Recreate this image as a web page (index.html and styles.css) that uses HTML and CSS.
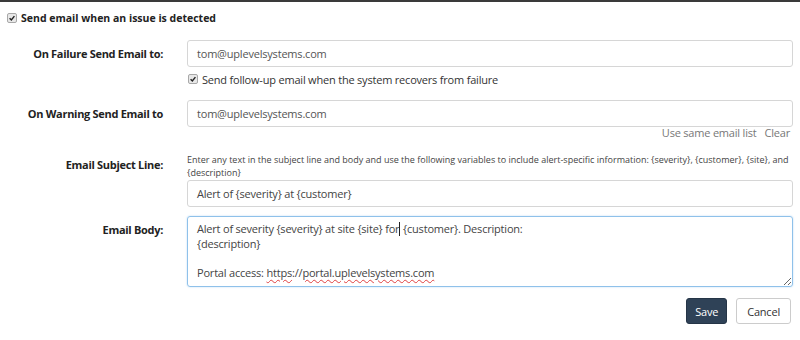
FILE: index.html
```html
<!DOCTYPE html>
<html lang="en">
<head>
    <meta charset="UTF-8">
    <meta name="viewport" content="width=device-width, initial-scale=1.0">
    <title>Email alerts</title>

    <link rel="stylesheet" href="styles.css">
</head>
<body>

    <div id="header" class="check-line">
        <span class="tick"><svg viewBox="0 0 10 10"><path d="M2 5.2 L4.2 7.4 L8 2.6" /></svg></span>
        <b>Send email when an issue is detected</b>
    </div>

    <div id="form">

        <label class="lbl">On Failure Send Email to:</label>
        <div class="field">
            <div class="input">tom@uplevelsystems.com</div>
            <div class="check-line follow">
                <span class="tick"><svg viewBox="0 0 10 10"><path d="M2 5.2 L4.2 7.4 L8 2.6" /></svg></span>
                Send follow-up email when the system recovers from failure
            </div>
        </div>

        <label class="lbl">On Warning Send Email to</label>
        <div class="field">
            <div class="input">tom@uplevelsystems.com</div>
            <div class="links"><span>Use same email list</span><span>Clear</span></div>
        </div>

        <label class="lbl lbl-top">Email Subject Line:</label>
        <div class="field">
            <p class="help">Enter any text in the subject line and body and use the following variables to include alert-specific information: {severity}, {customer}, {site}, and {description}</p>
            <div class="input dark">Alert of {severity} at {customer}</div>
        </div>

        <label class="lbl lbl-body">Email Body:</label>
        <div class="field">
            <div class="textarea">Alert of severity {severity} at site {site} for<span class="caret"></span> {customer}. Description:<br>{description}<br><br>Portal access: <span class="typo">https</span>://<span class="typo">portal.uplevelsystems.com</span></div>
            <div id="buttons">
                <button class="button save">Save</button>
                <button class="button cancel">Cancel</button>
            </div>
        </div>

    </div>

</body>
</html>
```

FILE: styles.css
```css
body{
    margin: 0;
    border-top: 2px solid #3a3a3a;
    background: #fff;
    font-family: 'Open Sans', 'Liberation Sans', sans-serif;
    font-size: 11px;
    letter-spacing: -0.2px;
    color: #333;
    overflow: hidden;
}

.check-line{
    display: flex;
    align-items: center;
    gap: 4px;
}

.tick{
    display: inline-block;
    width: 8px;
    height: 8px;
    border: 1px solid #a8a8a8;
    border-radius: 2px;
    background: #e8e8e8;
}

.tick svg{
    display: block;
    width: 8px;
    height: 8px;
}

.tick path{
    fill: none;
    stroke: #222;
    stroke-width: 1.8;
}

#header{
    padding: 6px 7px 0 7px;
    height: 20px;
    color: #222;
}

#header b{
    font-size: 10.5px;
    letter-spacing: 0;
}

#form{
    display: grid;
    grid-template-columns: 156px 1fr;
    column-gap: 24px;
    padding: 12px 7px 0 7px;
}

.lbl{
    text-align: right;
    font-weight: bold;
    letter-spacing: -0.3px;
    color: #222;
    padding-top: 6px;
}

.lbl-top{
    padding-top: 4px;
}

.lbl-body{
    padding-top: 15px;
}

.field{
    display: flex;
    flex-direction: column;
}

.input{
    height: 27px;
    box-sizing: border-box;
    border: 1px solid #d6d6d6;
    border-radius: 3px;
    padding: 5px 9px;
    color: #555;
    line-height: 15px;
}

.input.dark{
    color: #444;
}

.follow{
    height: 24px;
    margin-bottom: 9px;
    padding-left: 1px;
    color: #333;
}

.links{
    display: flex;
    justify-content: flex-end;
    gap: 8px;
    height: 26px;
    line-height: 12px;
    color: #777;
    padding-right: 3px;
}

.help{
    margin: 0 0 1px 0;
    font-size: 9px;
    letter-spacing: 0;
    line-height: 13px;
    color: #444;
}

.textarea{
    margin-top: 9px;
    height: 71px;
    box-sizing: border-box;
    border: 1px solid #8fc1ea;
    border-radius: 3px;
    box-shadow: 0 0 2px #b9daf4;
    padding: 5px 9px;
    line-height: 14.5px;
    color: #444;
    resize: vertical;
    overflow: hidden;
}

.caret{
    display: inline-block;
    width: 1px;
    height: 14px;
    background: #222;
    vertical-align: -3px;
}

.typo{
    text-decoration: underline wavy #e04040;
    text-decoration-thickness: 1px;
    text-underline-offset: 2px;
}

#buttons{
    display: flex;
    justify-content: flex-end;
    gap: 9px;
    margin-top: 11px;
    padding-right: 2px;
}

.button{
    font-family: 'Open Sans', 'Liberation Sans', sans-serif;
    font-size: 11px;
    letter-spacing: -0.2px;
    height: 26px;
    border-radius: 3px;
    padding: 0 10px;
}

.save{
    padding: 0 8px;
    background: #2f4257;
    color: #fff;
    border: 1px solid #253547;
}

.cancel{
    background: #fff;
    color: #333;
    border: 1px solid #ccc;
}
```
